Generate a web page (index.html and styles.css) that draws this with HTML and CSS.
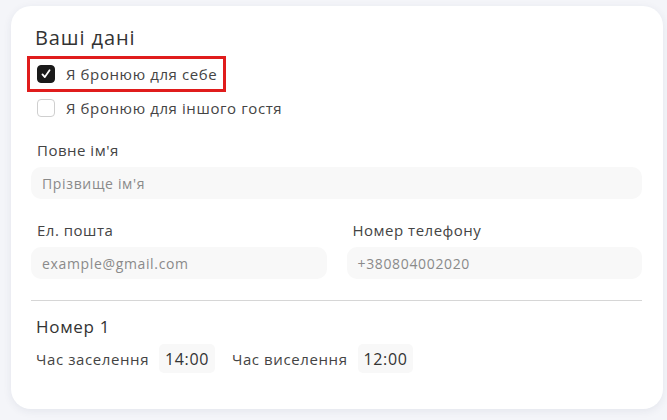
FILE: index.html
```html
<!DOCTYPE html>
<html lang="uk">
<head>
<meta charset="utf-8">
<link rel="stylesheet" href="styles.css">
</head>
<body>
<div class="card">
  <h2 class="title">Ваші дані</h2>
  <div class="checks">
    <label class="check highlighted">
      <span class="box checked">
        <svg viewBox="0 0 18 18" width="18" height="18"><path d="M5 9.4l2.7 3.1L13 4.8" fill="none" stroke="#fff" stroke-width="2" stroke-linecap="round" stroke-linejoin="round"/></svg>
      </span>
      <span class="check-text">Я бронюю для себе</span>
    </label>
    <label class="check">
      <span class="box"></span>
      <span class="check-text">Я бронюю для іншого гостя</span>
    </label>
  </div>
  <div class="field full">
    <div class="label">Повне ім'я</div>
    <div class="input">Прізвище ім'я</div>
  </div>
  <div class="row">
    <div class="field">
      <div class="label">Ел. пошта</div>
      <div class="input">example@gmail.com</div>
    </div>
    <div class="field">
      <div class="label">Номер телефону</div>
      <div class="input">+380804002020</div>
    </div>
  </div>
  <hr class="divider">
  <div class="room">
    <div class="room-title">Номер 1</div>
    <div class="times">
      <span class="time-label">Час заселення</span>
      <span class="time">14:00</span>
      <span class="time-label second">Час виселення</span>
      <span class="time">12:00</span>
    </div>
  </div>
</div>
</body>
</html>
```

FILE: styles.css
```css
* { box-sizing: border-box; }
html, body { margin: 0; padding: 0; }
body {
  background: #f4f5f9;
  font-family: "Open Sans", "Liberation Sans", sans-serif;
  color: #333;
  width: 667px;
  height: 420px;
  padding: 6px 4px 0 11px;
  letter-spacing: 0.6px;
}
.card {
  width: 652px;
  height: 403px;
  background: #fff;
  border-radius: 20px;
  box-shadow: 0 2px 8px rgba(40, 50, 90, 0.08);
  padding: 20px 21px 0 20px;
}
.title {
  margin: 0 0 0 4px;
  font-size: 20px;
  font-weight: 500;
  line-height: 24px;
  color: #333;
  letter-spacing: 0.9px;
}
.checks {
  margin-top: 6px;
  display: flex;
  flex-direction: column;
}
.check {
  display: flex;
  align-items: center;
  gap: 11px;
  height: 32px;
  padding-left: 6px;
  font-size: 15px;
  color: #444;
}
.highlighted {
  width: 199px;
  height: 36px;
  outline: 3px solid #e01c1c;
  outline-offset: -3px;
  margin-left: -4px;
  padding-left: 10px;
}
.box {
  width: 18px;
  height: 18px;
  border-radius: 4px;
  border: 1px solid #cfcfcf;
  display: flex;
  align-items: center;
  justify-content: center;
}
.box.checked {
  background: #1a1a1a;
  border-color: #1a1a1a;
}
.field { flex: 1; display: flex; flex-direction: column; }
.full { margin-top: 16px; }
.label {
  font-size: 15px;
  color: #444;
  padding-left: 6px;
  line-height: 20px;
  margin-bottom: 7px;
  letter-spacing: 0.5px;
}
.input {
  height: 32px;
  background: #f8f8f8;
  border-radius: 10px;
  font-size: 14px;
  color: #8a8a8a;
  padding-left: 11px;
  display: flex;
  align-items: center;
  letter-spacing: 0.65px;
}
.row {
  display: flex;
  gap: 20px;
  margin-top: 21px;
}
.divider {
  border: 0;
  border-top: 1px solid #d6d6d6;
  margin: 21px 0 0;
}
.room { padding-left: 5px; }
.room-title {
  font-size: 17px;
  font-weight: 500;
  margin-top: 15px;
  line-height: 22px;
  letter-spacing: 0.7px;
}
.times {
  display: flex;
  align-items: center;
  margin-top: 6px;
  font-size: 15px;
  color: #444;
}
.time {
  background: #f8f8f8;
  border-radius: 5px;
  padding: 0 6px;
  height: 29px;
  display: flex;
  align-items: center;
  margin-left: 10px;
  color: #333;
  font-size: 16px;
}
.second { margin-left: 17px; }
```
